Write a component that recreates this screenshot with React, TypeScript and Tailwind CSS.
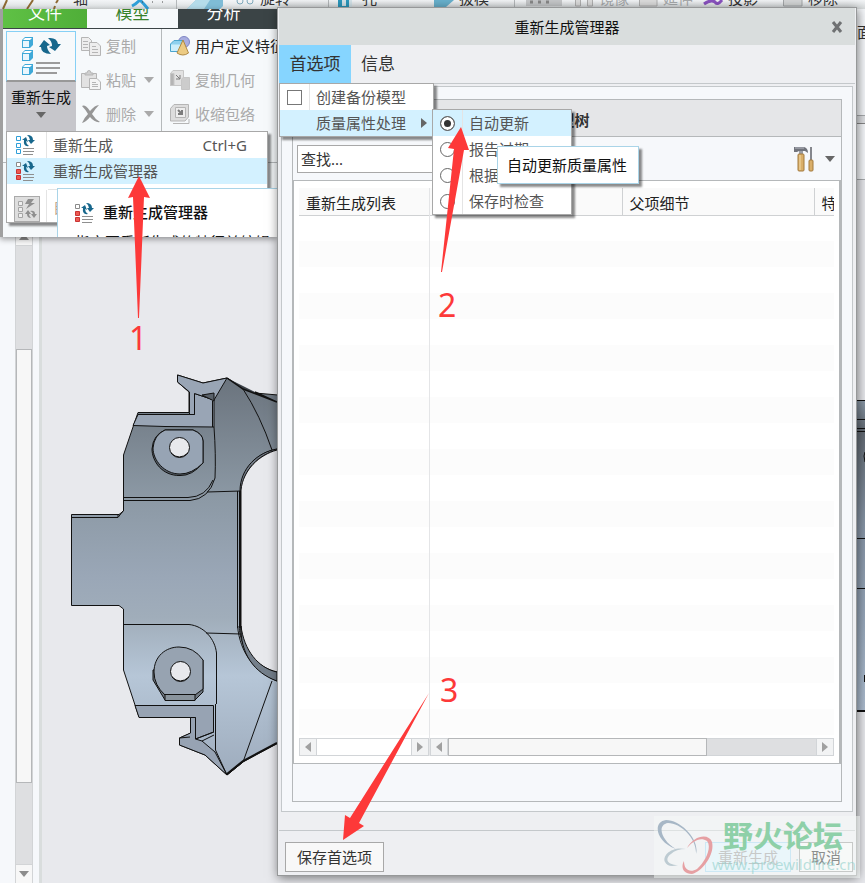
import { useState } from "react";
import type { ReactNode } from "react";

function Cube({ y }: { y: number }) {
  return (
    <g>
      <path d={`M1 ${y + 3} L4 ${y} H12 V${y + 8} L9 ${y + 11} H1 Z`} fill="#3fa9d8" />
      <path d={`M2 ${y + 3} L4 ${y + 1} H11 L9 ${y + 3} Z`} fill="#ffffff" />
      <rect x="2" y={y + 4} width="6" height="6" fill="#e9f6fd" />
    </g>
  );
}

// Stacked cubes with two circling arrows and list lines
function RegenIcon() {
  return (
    <svg width="40" height="40" viewBox="0 0 40 40">
      <Cube y={1} />
      <Cube y={14} />
      <Cube y={28} />
      <path d="M18 11 L23 4 L29 9 L26 10 Q26 14 30 18 Q20 18 20 11 Z" fill="#17678c" />
      <path d="M27 2 Q36 1 37 8 L40 8 L34 15 L28 11 L31 10 Q31 5 27 2 Z" fill="#17678c" />
      <path d="M15 27 H39 M15 32 H39 M15 37 H36" stroke="#9b9b9b" strokeWidth="2" />
    </svg>
  );
}

function SmallRegenIcon({ tone }: { tone: "blue" | "red" }) {
  return (
    <svg width="20" height="20" viewBox="0 0 20 20">
      <path d="M1.5 1.5 H5.5 V5.5 H1.5 Z" fill="#ffffff" stroke={tone === "red" ? "#8a8a8a" : "#2f9fd8"} />
      <path
        d="M1.500 8.500 H5.500 V12.500 H1.500 Z M1.500 14.500 H5.500 V18.500 H1.500 Z"
        fill={tone === "red" ? "#ee5a52" : "#ffffff"}
        stroke={tone === "red" ? "#c93434" : "#2f9fd8"}
      />
      <path d="M7 5 L11 2 L13 7 L11 6 Q11 9 14 11 Q8 12 9 5 Z" fill="#17678c" />
      <path d="M12 0 Q18 0 18 5 H20 L16 9 L13 5 H15 Q15 2 12 0 Z" fill="#17678c" />
      <path d="M8 13.500 H19 M8 16.500 H19 M8 19.500 H18" stroke="#8f8f8f" />
    </svg>
  );
}

function CopyIcon() {
  return (
    <svg width="20" height="20" viewBox="0 0 20 20" fill="#eeeeee" stroke="#b5b5b5">
      <path d="M0.5 1.5 H7.5 L10.5 4.5 V14.5 H0.5 Z" />
      <path d="M2 5.5 H7 M2 8.5 H7 M2 11.5 H7" />
      <path d="M8.5 6.5 H16 L19.5 10 V19.5 H8.5 Z" />
      <path d="M11 10.5 H15 M11 13.5 H17 M11 16.5 H17" />
    </svg>
  );
}

function PasteIcon() {
  return (
    <svg width="20" height="20" viewBox="0 0 20 20" fill="#e2e2e2" stroke="#b5b5b5">
      <path d="M0.5 3.5 H15.5 V17.5 H0.5 Z" />
      <path d="M4 5 V3 H6 Q6 0.5 8 0.5 Q10 0.5 10 3 H12 V5 Z" fill="#cfcfcf" />
      <path d="M8.5 8.5 H16 L19.5 12 V19.5 H8.5 Z" fill="#f4f4f4" />
      <path d="M11 12.5 H15 M11 14.5 H17 M11 16.5 H17" />
    </svg>
  );
}

function DeleteIcon() {
  return (
    <svg width="20" height="20" viewBox="0 0 20 20">
      <path d="M1 2 Q4 0 9 7 Q14 1 18 1 Q14 5 11 10 Q14 15 19 18 Q14 19 9 13 Q5 18 1 19 Q3 14 7 10 Q4 5 1 2 Z" fill="#969696" />
    </svg>
  );
}

function FeatureIcon() {
  return (
    <svg width="20" height="20" viewBox="0 0 20 20">
      <circle cx="14" cy="6" r="5.5" fill="#a9aee0" stroke="#7f86c4" />
      <path d="M0.5 8 L4 4.5 H13 V12 L10 15.5 H0.5 Z" fill="#8ed1ef" stroke="#4ba5cd" />
      <path d="M1 8.5 H10 V15 H1 Z" fill="#cdeefb" />
      <path d="M13 4 L18.5 17 Q13 21 7 17 Z" fill="#eccb83" stroke="#b08a45" />
    </svg>
  );
}

function GeometryIcon() {
  return (
    <svg width="20" height="20" viewBox="0 0 20 20" fill="#e2e2e2" stroke="#c6c6c6">
      <path d="M0.5 3.5 L3 0.5 H13.5 V12 L11 15.5 H0.5 Z" />
      <path d="M0.5 3.5 H4 V15.5 H0.5 Z" fill="#b4b4b4" />
      <path d="M11.5 9.5 L13 7.5 H19.5 V19.5 H11.5 Z" fill="#cccccc" />
      <path d="M6 5 L10 9 M10 5 V9 H6" stroke="#7c7c7c" fill="none" />
    </svg>
  );
}

function ShrinkIcon() {
  return (
    <svg width="20" height="20" viewBox="0 0 20 20" fill="#dddddd" stroke="#b5b5b5">
      <path d="M0.5 4.5 L4 0.5 H18.5 V13 L15 17 H0.5 Z" />
      <path d="M5.5 3.5 H15.5 V13.5 H5.5 Z" fill="#eeeeee" />
      <path d="M8 6 L12 10 M12 6 V10 H8" stroke="#7c7c7c" strokeWidth="2" fill="none" />
      <path d="M3 19.5 H19 V15" fill="none" />
    </svg>
  );
}

function ToolsIcon() {
  return (
    <svg width="22" height="26" viewBox="0 0 22 26">
      <path d="M1 1 H11 Q15 2 15 7 L12 5 H6 L4 6 H1 Z" fill="#71747c" />
      <path d="M2 2 H11" stroke="#b9bbc4" />
      <rect x="6" y="5" width="4" height="3" fill="#9b9da3" />
      <rect x="5" y="8" width="6" height="17" rx="1" fill="#d9ae69" stroke="#a37a3d" />
      <path d="M7 9 V24" stroke="#f3dba8" />
      <path d="M18 1 V14" stroke="#85878d" strokeWidth="2" />
      <rect x="16" y="14" width="4" height="11" rx="1" fill="#d9ae69" stroke="#a37a3d" />
    </svg>
  );
}

function Caret({ className }: { className?: string }) {
  return (
    <svg width="10" height="6" viewBox="0 0 10 6" className={className}>
      <path d="M0 0 H10 L5 6 Z" fill="currentColor" />
    </svg>
  );
}

function SideCaret({ flip }: { flip?: boolean }) {
  return (
    <svg width="6" height="10" viewBox="0 0 6 10" className={flip ? "rotate-180" : ""}>
      <path d="M0 0 L6 5 L0 10 Z" fill="currentColor" />
    </svg>
  );
}

// Bottom edge of the application's own toolbar
function ToolbarStrip() {
  return (
    <div className="flex h-[9px] items-end overflow-hidden bg-linear-to-b from-[#f3f5f7] to-[#d8dcdd] pb-[2px] whitespace-nowrap leading-[17px]">
      <svg width="73" height="9" viewBox="0 0 73 9" className="-mb-[2px] shrink-0">
        <path d="M3 9 L7 0 M27 9 L33 0 M54 9 L55 6 M56 3 L58 0" stroke="#8d6a34" strokeWidth="2" fill="none" />
      </svg>
      <span className="w-[57px] shrink-0">轴</span>
      <svg width="130" height="9" viewBox="0 0 130 9" className="-mb-[2px] shrink-0">
        <path d="M2 6 Q6 4 10 0 Q14 4 18 9" stroke="#2f9fd8" strokeWidth="3" fill="none" />
        <path d="M12 2 h1 M22 2 h1 M32 2 h1" stroke="#444444" />
        <path d="M46.5 0 V9" stroke="#b4b8ba" />
        <path d="M57 9 L66 0 H93 V6 L90 9 Z" fill="#7fbcd6" />
        <path d="M57 9 L66 0 H80 L74 9 Z" fill="#b5dcea" />
        <circle cx="110" cy="1" r="3" stroke="#7fa9bb" fill="none" />
        <circle cx="120" cy="1" r="3" stroke="#7fa9bb" fill="none" />
      </svg>
      <span className="w-[68px] shrink-0">旋转</span>
      <svg width="34" height="9" viewBox="0 0 34 9" className="-mb-[2px] shrink-0">
        <path d="M0.5 0 V9" stroke="#b4b8ba" />
        <path d="M10 0 H24 V7 H10 Z" fill="#2c98bd" />
        <path d="M14 0 H18 V6 H14 Z M21 0 H24 V7 H21 Z" fill="#d4e4ea" />
      </svg>
      <span className="w-[72px] shrink-0">孔</span>
      <svg width="25" height="9" viewBox="0 0 25 9" className="-mb-[2px] shrink-0">
        <path d="M0 0 H20 L12 7 H0 Z" fill="#68b1cd" />
      </svg>
      <span className="w-[55px] shrink-0">拔模</span>
      <svg width="85" height="9" viewBox="0 0 85 9" className="-mb-[2px] shrink-0">
        <path d="M0.5 0 V9" stroke="#b4b8ba" />
        <path d="M12 0 H48 V6 H12 Z" fill="#c6c8ca" />
        <path d="M16 2 h3 M24 2 h3 M32 2 h3" stroke="#888888" strokeWidth="3" />
        <path d="M61.5 0 V6 H66.5 V0 M73.5 0 V6 H78.5 V0" stroke="#b0b0b0" fill="#dddddd" />
      </svg>
      <span className="w-[40px] shrink-0 text-[#a8abad]">镜像</span>
      <svg width="24" height="9" viewBox="0 0 24 9" className="-mb-[2px] shrink-0">
        <path d="M0.5 0 V6 H18 V0" stroke="#b0b0b0" fill="#dddddd" />
      </svg>
      <span className="w-[40px] shrink-0 text-[#a8abad]">延伸</span>
      <svg width="25" height="9" viewBox="0 0 25 9" className="-mb-[2px] shrink-0">
        <path d="M1 4 Q8 -1 12 2 Q14 6 19 0" stroke="#8a52c0" strokeWidth="3" fill="none" />
      </svg>
      <span className="w-[55px] shrink-0">投影</span>
      <svg width="25" height="9" viewBox="0 0 25 9" className="-mb-[2px] shrink-0">
        <path d="M0.5 0 V6 H19 V0" stroke="#a5a8aa" fill="#d5d7d8" />
      </svg>
      <span className="shrink-0">移除</span>
    </div>
  );
}

function PartModel() {
  return (
    <svg
      width="217"
      height="410"
      viewBox="60 370 217 410"
      className="absolute top-[190px] left-[18px]"
      stroke="#111111"
      fill="none"
    >
      <defs>
        <linearGradient id="body" gradientUnits="userSpaceOnUse" x1="0" y1="380" x2="0" y2="775">
          <stop offset="0" stopColor="#6b747e" />
          <stop offset="0.3" stopColor="#8c99a5" />
          <stop offset="0.5" stopColor="#9aa7b7" />
          <stop offset="0.6" stopColor="#a0adba" />
          <stop offset="0.75" stopColor="#b6c6d7" />
          <stop offset="1" stopColor="#9eacbd" />
        </linearGradient>
      </defs>
      <path
        d="M177.5 375 L203 383 L227 378 L243 388 L255 393 L278 395 V449 C258 452 241 468 241 490 V628 C241 652 258 668 278 672 V743 L243 762 L227 775 L205 755 L179.5 745 V738 L191 733 V717 H139 L135 705 L123.5 670 V609 L119 605.5 H71.500 V514.500 H119 L123.500 511 V455 L133 427 L138 412.500 H189 V392 L177.500 382 Z"
        fill="url(#body)"
      />
      {/* upper flange and hook */}
      <path d="M138 414.500 H194.500 V393.500 L214 400 V427 L165 426.500 L133 425.500 Z" fill="#99a5b5" />
      <path d="M189.500 412.500 V392 L177.500 382 V375 L203 383 L227 378 L214 400 L194.500 393.500 V414.500 H189.500 Z" fill="#99a5b5" />
      <path d="M202 395 L214 393 V401 Z" fill="#59616a" />
      <path d="M212.500 401 V427" />
      <path d="M227 378 L243 389 L277 402 L255 392" fill="#3c4249" strokeWidth="1.5" />
      <path d="M243 389 Q260 415 272 450" />
      <path d="M214 427 Q216 455 215 478 Q209 499 190 500.500 H123 M123 497.500 H188 Q206 497 213 480" />
      <path d="M207 492 L241 491 M237.500 491 V628 M239.500 491 V628" />
      <path d="M240.500 491 V628" strokeWidth="2" />
      <path d="M71 517.500 H118 L123 511 M118 514 V517" />
      <path d="M277 449 C258 452 240 468 240 491 H242 C243 470 258 455 277 450" fill="#707985" />
      <path d="M277 450 C259 455 243 470 241 490 V628 C242 652 259 668 277 672" fill="#e8e9ed" />
      {/* upper boss */}
      <path d="M165 430 H193 Q203 434 203 441 V463 Q192 476 180 475.500 C162 476 152 461 152 449 Q153 435 165 430 Z" fill="#59626c" />
      <path d="M165 430 H193 Q203 434 203 441 V463 Q192 474 180 474 C164 474 153 460 153 448 Q154 435 165 430 Z" fill="#97a4b4" />
      <circle cx="179.5" cy="447.5" r="10" fill="#e8e9ed" />
      <path d="M171 453 Q179 461 188 453" />
      <path d="M123 624.500 H189 C204 626 215 639 216.500 653 V704 M206 633 L241 634" />
      <path d="M237.500 626 C240 653 255 672 277 681 M239 626 C241 651 256 672 277 679" />
      <path d="M241 626 C244 650 258 668 277 672 V681 C254 673 240 653 241 626 Z" fill="#747f8b" />
      {/* lower boss */}
      <path d="M153 670 V680 L165 700 H195 L203 692 V660 Z" fill="#6f7882" />
      <path d="M154 672 C154 656 166 647 179 647 Q194 647 203 660 V689 L195 695 H165 Q154 685 154 672 Z" fill="#97a3b1" />
      <path d="M165 694.500 H195 V700.500 H165 Z" fill="#8a949d" />
      <circle cx="180.5" cy="671.5" r="10" fill="#e8e9ed" />
      <path d="M172 677 Q180 685 189 677" />
      {/* lower flange and hook */}
      <path d="M135 705.500 H213.500 V732 L195.500 739 V717.500 H139 Z" fill="#97a3b3" />
      <path d="M190.500 717.500 H195.500 V739 L202 741 L215 752 L227 775 L205 755 L179.500 745 V738 L190.500 733 Z" fill="#97a3b3" />
      <path d="M195.500 739 L214 732 M202 741 L214 735 M179.500 738 L190 737" />
      <path d="M215.500 704 V750 L227 775 L243 762 L272 681" />
      <path d="M227 774 L243 761 L277 743" strokeWidth="2" />
    </svg>
  );
}

function Workspace() {
  return (
    <div className="flex flex-1 bg-[#e8e9ed]">
      <div className="flex w-[42px] shrink-0 border-r-[3px] border-[#d9dddd] bg-[#f6f8fb] pt-12 pl-[15px]">
        <div className="flex w-[18px] flex-col border-x border-[#d2d4d6] bg-[#dedfe1]">
          <div className="flex h-[18px] items-center justify-center border-b border-[#d2d4d6] bg-[#f7f7f7] text-[#8c8c8c]">
            <Caret className="rotate-180" />
          </div>
          <div className="h-[103px]" />
          <div className="flex-1 border border-[#b5b7b9] bg-[#f7f7f7]" />
          <div className="h-[81px]" />
          <div className="flex h-[19px] items-center justify-center border-t border-[#d2d4d6] bg-[#f7f7f7] text-[#8c8c8c]">
            <Caret />
          </div>
        </div>
      </div>
      <div className="relative flex-1 overflow-hidden">
        <PartModel />
        <svg width="12" height="312" viewBox="0 0 12 312" className="absolute top-[220px] right-0">
          <defs>
            <linearGradient id="edge" x1="0" y1="0" x2="0" y2="1">
              <stop offset="0" stopColor="#8b99a8" />
              <stop offset="0.1" stopColor="#626a73" />
              <stop offset="0.4" stopColor="#8795a6" />
              <stop offset="0.7" stopColor="#97a7ba" />
              <stop offset="1" stopColor="#adbdd0" />
            </linearGradient>
          </defs>
          <rect width="12" height="312" fill="url(#edge)" />
          <path d="M0 0.5 H12 M0 19.5 H12 M0 28.5 H12 M0 31.5 H12 M0 138.5 H12 M0 188.5 H12" stroke="#111111" />
          <path d="M0 311 H12" stroke="#111111" strokeWidth="2" />
          <path d="M12 52 L11 56 L12 62 M11.5 275 V282" stroke="#111111" fill="none" />
        </svg>
      </div>
    </div>
  );
}

function RibbonCommand({ icon, label, arrow, active }: { icon: ReactNode; label: string; arrow?: boolean; active?: boolean }) {
  return (
    <button
      className={`flex h-[34px] items-center gap-[5px] whitespace-nowrap ${active ? "text-[#222222]" : "text-[#aaaaaa]"}`}
    >
      {icon}
      {label}
      {arrow && <Caret className="ml-[3px]" />}
    </button>
  );
}

function Ribbon() {
  return (
    <div className="absolute top-[9px] left-0 h-[228px] w-[277px] shadow-[0_2px_6px_rgba(0,0,0,0.4)]">
      <div className="h-full overflow-hidden border-l-[3px] border-[#a0a0a0] bg-[#f6f9fb]">
        <div className="flex h-5 border-b border-[#3b4446] text-[17px] leading-[17px]">
          <button className="flex w-[84px] items-end justify-center overflow-hidden bg-linear-to-r from-[#5fc145] to-[#4fae38] pb-[7px] text-white">
            文件
          </button>
          <button className="flex w-[91px] items-end justify-center overflow-hidden pb-[7px] text-[#37822a]">模型</button>
          <button className="flex flex-1 items-end justify-center overflow-hidden bg-[#3b4446] pr-2 pb-[7px] text-white">
            分析
          </button>
        </div>
        <div className="flex h-[134px] border-b border-[#b5b9bb] pl-[3px]">
          <button className="mt-[2px] flex w-[70px] shrink-0 flex-col bg-[#c6c6cb] text-[#111111]">
            <span className="flex h-[51px] w-full items-center justify-center border border-b-2 border-[#86d0f5] border-b-[#989898] bg-[#f6f9fb]">
              <RegenIcon />
            </span>
            <span className="flex h-[30px] w-full items-center justify-center">重新生成</span>
            <Caret className="mx-auto text-[#666666]" />
          </button>
          <div className="w-[86px] shrink-0 border-r border-[#b5b9bb] pl-[5px]">
            <RibbonCommand icon={<CopyIcon />} label="复制" />
            <RibbonCommand icon={<PasteIcon />} label="粘贴" arrow />
            <RibbonCommand icon={<DeleteIcon />} label="删除" arrow />
          </div>
          <div className="shrink-0 pl-2">
            <RibbonCommand icon={<FeatureIcon />} label="用户定义特征" active />
            <RibbonCommand icon={<GeometryIcon />} label="复制几何" />
            <RibbonCommand icon={<ShrinkIcon />} label="收缩包络" />
          </div>
        </div>
        <div className="flex h-[65px] items-end pb-1 pl-9 font-bold text-[#222222] leading-[17px]">模型</div>
      </div>

      <div className="absolute top-[122px] left-[6px] w-[262px] border border-[#a8a8a8] bg-white text-[#555555] shadow-[3px_3px_2px_rgba(0,0,0,0.45)]">
        <button className="flex h-[26px] w-full items-center">
          <span className="flex h-full w-10 items-center border-r border-[#e4e4e4] pl-2">
            <SmallRegenIcon tone="blue" />
          </span>
          <span className="pl-[6px]">重新生成</span>
          <span className="ml-auto pr-5">Ctrl+G</span>
        </button>
        <button className="flex h-[26px] w-full items-center bg-[#d3f1ff]">
          <span className="flex w-10 pl-2">
            <SmallRegenIcon tone="red" />
          </span>
          <span className="pl-[6px]">重新生成管理器</span>
        </button>
        <div className="ml-[41px] h-[6px] border-b border-[#e4e4e4]" />
        <button className="flex h-8 w-full items-end">
          <span className="flex h-full w-10 items-end border-r border-[#e4e4e4] pl-[7px]">
            <span className="flex h-[26px] w-[26px] items-center justify-center border border-[#aaaaaa] bg-[#dedede]">
              <svg width="20" height="20" viewBox="0 0 20 20">
                <path d="M1.5 2.5 h4 v4 h-4 Z M1.5 8.5 h4 v4 h-4 Z M1.5 14.5 h4 v4 h-4 Z" stroke="#a5a5a5" fill="#eeeeee" />
                <path d="M11 0 H17 L14 4 H18 L9 10 L12 5 H8 Z" fill="#8f8f8f" />
                <path d="M8 15 L11 11 L14 15 H12 Q12 17 14 19 Q10 19 10 15 Z M13 12 Q18 11 18 15 H20 L17 19 L14 15 H16 Q16 13 13 12 Z" fill="#8f8f8f" />
              </svg>
            </span>
          </span>
          <span className="pb-1 pl-[6px] text-[#c0a890]">自动</span>
        </button>
      </div>

      <div
        role="tooltip"
        className="absolute top-[179px] right-0 h-[49px] w-[220px] overflow-hidden border border-r-0 border-b-0 border-[#a9d4e8] bg-white text-[#111111]"
      >
        <div className="flex h-[45px] items-center gap-[9px] pt-[2px] pl-4 font-medium">
          <SmallRegenIcon tone="red" />
          重新生成管理器
        </div>
        <p className="pl-[17px] whitespace-nowrap leading-[17px]">指定要重新生成的特征并编辑或</p>
      </div>
    </div>
  );
}

const modes = ["自动更新", "报告过期", "根据", "保存时检查"];

function PreferencesMenu() {
  const [backup, setBackup] = useState(false);
  const [mode, setMode] = useState(modes[0]);

  return (
    <div className="absolute top-full left-0 z-10 w-[155px] border border-[#a8a8a8] bg-white text-[15px] text-[#555555] shadow-[3px_3px_2px_rgba(0,0,0,0.45)]">
      <label className="flex h-[26px] items-center whitespace-nowrap">
        <span className="flex h-full w-[30px] items-center border-r border-[#e4e4e4] pl-[7px]">
          <input
            type="checkbox"
            checked={backup}
            onChange={(e) => setBackup(e.target.checked)}
            className="h-[15px] w-[15px] appearance-none border border-[#777777] bg-white checked:bg-[#555555]"
          />
        </span>
        <span className="pl-[6px]">创建备份模型</span>
      </label>
      <div className="relative flex h-[26px] items-center bg-[#d3f1ff] pr-[6px] pl-9 whitespace-nowrap">
        质量属性处理
        <span className="ml-auto text-[#666666]">
          <SideCaret />
        </span>
        <div className="absolute -top-px left-[152px] w-[140px] border border-[#a8a8a8] bg-white shadow-[3px_3px_2px_rgba(0,0,0,0.45)]">
          {modes.map((m) => (
            <label key={m} className={`flex h-[26px] items-center ${m === mode ? "bg-[#d3f1ff]" : ""}`}>
              <span className="flex h-full w-[30px] items-center border-r border-[#e4e4e4] pl-[7px]">
                <input
                  type="radio"
                  name="mode"
                  checked={m === mode}
                  onChange={() => setMode(m)}
                  className="h-[15px] w-[15px] appearance-none rounded-full border border-[#666666] bg-white checked:bg-[#333333] checked:shadow-[inset_0_0_0_3px_#ffffff]"
                />
              </span>
              <span className="pl-[6px]">{m}</span>
            </label>
          ))}
          <div
            role="tooltip"
            className="absolute top-9 left-16 flex h-[38px] w-[142px] items-center border border-[#a9d4e8] bg-white pl-[9px] text-[#111111] shadow-[3px_3px_2px_rgba(0,0,0,0.45)]"
          >
            自动更新质量属性
          </div>
        </div>
      </div>
    </div>
  );
}

const rows = Array.from({ length: 20 }, (_, i) => i);

function ListTable({ columns }: { columns: { label: string; width?: string }[] }) {
  return (
    <table className="w-full table-fixed border-collapse text-left text-[#222222]">
      <thead>
        <tr className="h-[27px] border-b border-[#cfd1d3] bg-[#fafafa]">
          {columns.map((c, i) => (
            <th
              key={i}
              className={`overflow-hidden border-[#cfd1d3] pt-[3px] pl-[7px] font-normal whitespace-nowrap not-last:border-r ${c.width ?? ""}`}
            >
              {c.label}
            </th>
          ))}
        </tr>
      </thead>
      <tbody>
        {rows.map((r) => (
          <tr key={r} className="h-[26px] even:bg-[#fcfcfc]">
            <td colSpan={columns.length} />
          </tr>
        ))}
      </tbody>
    </table>
  );
}

function ScrollButton({ flip, label }: { flip?: boolean; label: string }) {
  return (
    <button
      aria-label={label}
      className="flex h-[18px] w-[18px] shrink-0 items-center justify-center border border-[#d2d5d8] bg-[#f2f3f4] text-[#a0a0a0]"
    >
      <SideCaret flip={flip} />
    </button>
  );
}

function RegenDialog() {
  return (
    <div
      role="dialog"
      aria-label="重新生成管理器"
      className="absolute top-[7px] right-2 bottom-[7px] left-[277px] flex flex-col border border-[#969899] bg-[#eeeff2] px-px shadow-[1px_2px_10px_rgba(0,0,0,0.5)]"
    >
      <div className="relative flex h-[37px] shrink-0 items-center justify-center bg-[#d9dddd] pt-[2px] text-[#111111]">
        重新生成管理器
        <button aria-label="关闭" className="absolute right-3 bottom-3">
          <svg width="12" height="12" viewBox="0 0 12 12">
            <path d="M2 1 L10 11 M10 1 L2 11" stroke="#6f7173" strokeWidth="3" />
          </svg>
        </button>
      </div>

      <div className="flex h-[39px] shrink-0 border-b border-[#c4c8cb] text-[17px] text-[#333333]">
        <div className="relative flex">
          <button className="w-[72px] bg-[#86d5ff]">首选项</button>
          <PreferencesMenu />
        </div>
        <button className="px-[10px]">信息</button>
      </div>

      <div className="mx-[2px] mt-[2px] flex flex-1 flex-col border border-[#c4c8cb] bg-[#f6f8fb] px-[10px] pt-3 pb-[9px]">
        <div className="flex flex-1 flex-col border border-[#b5b8ba]">
          <h2 className="flex h-[37px] items-center justify-center border-b border-[#b5b8ba] bg-[#e5e6e8] pt-1 font-bold text-[#333333]">
            模型树
          </h2>
          <div className="flex h-[43px] items-center pr-[6px] pl-1">
            <input
              type="text"
              aria-label="查找"
              placeholder="查找..."
              className="h-7 w-[260px] border border-[#a8a8a8] bg-white px-[3px] placeholder:text-[#333333]"
            />
            <button aria-label="设置" className="ml-auto flex items-center gap-[10px] text-[#666666]">
              <ToolsIcon />
              <Caret />
            </button>
          </div>
          <div className="flex border-t border-r-2 border-b border-l border-[#b5b8ba] bg-white px-[5px] pt-[7px] pb-[7px]">
            <div className="flex w-[131px] shrink-0 flex-col border-r border-[#e4e5e7]">
              <ListTable columns={[{ label: "重新生成列表" }]} />
              <div className="mt-[3px] flex h-[18px] border-y border-[#d2d5d8]">
                <span className="-mt-px">
                  <ScrollButton flip label="向左" />
                </span>
                <span className="flex-1" />
                <span className="-mt-px">
                  <ScrollButton label="向右" />
                </span>
              </div>
            </div>
            <div className="min-w-0 flex-1">
              <ListTable columns={[{ label: "", width: "w-48" }, { label: "父项细节", width: "w-48" }, { label: "特" }]} />
              <div className="mt-[3px] flex h-[18px] bg-[#dedfe1]">
                <ScrollButton flip label="向左" />
                <span className="w-[259px] border border-[#b5b7b9] bg-[#f7f7f7]" />
                <span className="flex-1 border-y border-[#d2d5d8]" />
                <ScrollButton label="向右" />
              </div>
            </div>
          </div>
        </div>
      </div>

      <div className="mt-[18px] flex h-[45px] shrink-0 items-start gap-2 border-t border-[#c4c8cb] px-[6px] pt-[11px]">
        <button className="mr-auto h-[30px] border border-[#a8a8a8] bg-[#f8f8f8] px-[11px] text-[#333333]">保存首选项</button>
        <button disabled className="h-[30px] border border-[#a5d6f2] bg-[#dff2fd] px-3 text-[#999999]">
          重新生成
        </button>
        <button className="-mr-[4px] h-[30px] border border-[#999999] bg-[#f8f8f8] px-[11px] text-[#222222]">取消</button>
      </div>
    </div>
  );
}

function Watermark() {
  return (
    <div className="pointer-events-none absolute right-[5px] bottom-[5px] h-[62px] w-[206px] bg-[#f6faf7]/50">
      <svg width="60" height="62" viewBox="0 0 60 62" className="absolute top-0 left-0">
        <path d="M42 38 C46 24 27 4 12 4 C-2 6 2 26 22 33 C8 25 2 9 14 7 C27 7 43 23 42 38 Z" fill="#a7b7c6" />
        <path d="M32 33 C17 30 8 40 11 46 Q14 52 24 49 C12 49 11 42 17 38 Q22 33 32 33 Z" fill="#bdcbd2" />
        <path d="M33 32 C40 19 55 17 58 26 C61 38 49 55 38 58 C28 58 27 50 30 45 C30 54 36 57 43 53 C52 45 58 31 53 25 C46 20 38 26 33 32 Z" fill="#e6a0a3" />
      </svg>
      <p className="absolute top-[4px] left-[69px] text-[30px] leading-[32px] font-bold whitespace-nowrap text-[#8ed0a8]">野火论坛</p>
      <p className="absolute top-[38px] left-[58px] text-[15px] leading-[20px] whitespace-nowrap text-[#8fcfca]/60">
        www.proewildfire.cn
      </p>
    </div>
  );
}

// Numbered step arrows drawn over the windows
function Steps() {
  return (
    <div className="pointer-events-none absolute inset-0 z-20 text-[32px] leading-8 text-[#fd3939]">
      <svg width="500" height="860" viewBox="0 0 500 860" className="absolute top-0 left-0" fill="#fd3939">
        <path d="M139 176 L150 198 L144 197 L139 318 L138 318 L133 197 L128 198 Z" />
        <path d="M461 127 L469 150 L464 150 L442 272 L441 272 L454 149 L448 148 Z" />
        <path d="M343 840 L345 815 L350 818 L429 693 L359 823 L364 826 Z" />
      </svg>
      <span className="absolute top-[322px] left-[129px]">1</span>
      <span className="absolute top-[289px] left-[438px]">2</span>
      <span className="absolute top-[674px] left-[440px]">3</span>
    </div>
  );
}

export default function App() {
  return (
    <div className="relative flex h-screen min-h-[860px] flex-col overflow-hidden font-['Noto_Sans','Noto_Sans_CJK_SC',sans-serif] text-[15px] text-[#333333]">
      <ToolbarStrip />
      <div className="flex h-[171px] shrink-0 flex-col bg-[#f6f8fb] text-right">
        <div className="h-[107px] overflow-hidden border-b border-[#a8abad] pt-3">
          <span className="-mr-[7px]">面</span>
        </div>
        <div className="h-2 border-b border-[#888888] bg-[#dfe1e4]" />
        <div className="flex-1 border-b border-[#a8abad]" />
      </div>
      <Workspace />
      <Ribbon />
      <RegenDialog />
      <Watermark />
      <Steps />
    </div>
  );
}
